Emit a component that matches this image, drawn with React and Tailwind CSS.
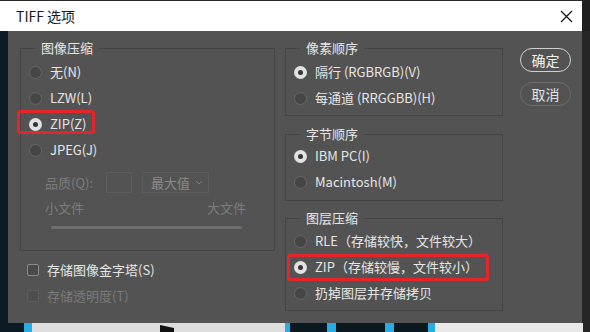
import React from "react";

const Radio = ({ checked }) =>
  checked ? (
    <span className="flex h-[13px] w-[13px] shrink-0 items-center justify-center rounded-full bg-[#e2e2e2]">
      <span className="h-[5px] w-[5px] rounded-full bg-[#363636]" />
    </span>
  ) : (
    <span className="h-[13px] w-[13px] shrink-0 rounded-full border border-[#676767] bg-[#464646]" />
  );

const Option = ({ label, checked, mark }) => (
  <div className="relative flex h-[26px] items-center gap-[8px] pl-[8px] text-[13px] text-[#e6e6e6]">
    <Radio checked={checked} />
    <span>{label}</span>
    {mark && (
      <span className={"pointer-events-none absolute rounded-[3px] border-[3px] border-[#e3262c] " + mark} />
    )}
  </div>
);

const Group = ({ title, className, children }) => (
  <fieldset className={"border border-[#444444] " + className}>
    <legend className="ml-[14px] px-[6px] text-[13px] leading-[18px] text-[#e6e6e6]">{title}</legend>
    {children}
  </fieldset>
);

const Check = ({ label, disabled }) => (
  <div className="flex h-[22px] items-center gap-[8px] pl-[7px] text-[13px]">
    <span
      className={
        disabled
          ? "h-[12px] w-[12px] rounded-[2px] border border-[#5d5d5d] bg-[#4e4e4e]"
          : "h-[12px] w-[12px] rounded-[2px] border border-[#8a8a8a] bg-[#4a4a4a]"
      }
    />
    <span className={disabled ? "text-[#7a7a7a]" : "text-[#e6e6e6]"}>{label}</span>
  </div>
);

export default function App() {
  return (
    <div className="flex h-[332px] w-[590px] flex-col overflow-hidden bg-[#0c1a23] font-['Noto_Sans_CJK_SC','Noto_Sans',sans-serif]">
      {/* title bar */}
      <div className="flex h-[31px] shrink-0">
        <div className="flex w-[582px] items-center justify-between border-t border-[#2a2a2a] bg-white pl-[16px] pr-[9px]">
          <span className="text-[14px] text-[#1a1a1a]">TIFF 选项</span>
          <svg width="13" height="13" viewBox="0 0 13 13">
            <path d="M1 1L12 12M12 1L1 12" stroke="#111" strokeWidth="1.2" />
          </svg>
        </div>
        <div className="flex-1 bg-[#1f1f1f]" />
      </div>

      {/* dialog body */}
      <div className="flex h-[292px] shrink-0">
        <div className="w-[8px] bg-[#0d1b24]" />
        <div className="flex w-[574px] bg-[#535353] pl-[12px] pt-[8px]">
          {/* left column */}
          <div className="flex w-[255px] flex-col">
            <Group title="图像压缩" className="w-[255px] pb-[21px]">
              <div className="pt-[2px]">
                <Option label="无(N)" />
                <Option label="LZW(L)" />
                <Option label="ZIP(Z)" checked mark="left-[-4px] top-[-1px] h-[24px] w-[78px]" />
                <Option label="JPEG(J)" />
              </div>
              <div className="mt-[8px] flex h-[23px] items-center pl-[24px] text-[13px] text-[#7c7c7c]">
                <span className="w-[61px]">品质(Q):</span>
                <span className="h-[21px] w-[26px] border border-[#5c5c5c]" />
                <span className="ml-[10px] flex h-[21px] w-[67px] items-center justify-between border border-[#5c5c5c] pl-[8px] pr-[5px]">
                  <span className="text-[#8a8a8a]">最大值</span>
                  <svg width="8" height="5" viewBox="0 0 8 5">
                    <path d="M1 1L4 4L7 1" stroke="#7a7a7a" fill="none" strokeWidth="1" />
                  </svg>
                </span>
              </div>
              <div className="mt-[5px] flex h-[18px] items-center justify-between pl-[24px] pr-[28px] text-[13px] text-[#7c7c7c]">
                <span>小文件</span>
                <span>大文件</span>
              </div>
              <div className="ml-[30px] mr-[32px] mt-[9px] h-[3px] rounded-full bg-[#6e6e6e]" />
            </Group>
            <div className="mt-[8px]">
              <Check label="存储图像金字塔(S)" />
            </div>
            <div className="mt-[4px]">
              <Check label="存储透明度(T)" disabled />
            </div>
          </div>

          {/* right column */}
          <div className="ml-[10px] flex w-[218px] flex-col">
            <Group title="像素顺序" className="pb-[4px]">
              <div className="pt-[2px]">
                <Option label="隔行 (RGBRGB)(V)" checked />
                <Option label="每通道 (RRGGBB)(H)" />
              </div>
            </Group>
            <Group title="字节顺序" className="mt-[9px] pb-[5px]">
              <Option label="IBM PC(I)" checked />
              <Option label="Macintosh(M)" />
            </Group>
            <Group title="图层压缩" className="mt-[8px] pb-[4px]">
              <div className="pt-[1px]">
                <Option label="RLE（存储较快，文件较大）" />
                <Option label="ZIP（存储较慢，文件较小）" checked mark="left-[1px] top-0 h-[27px] w-[202px]" />
                <Option label="扔掉图层并存储拷贝" />
              </div>
            </Group>
          </div>

          {/* buttons */}
          <div className="ml-[17px] mt-[9px] flex flex-col gap-[10px]">
            <button className="flex h-[24px] w-[51px] items-center justify-center rounded-full border-[1.5px] border-[#d0d0d0] text-[14px] text-[#f0f0f0]">
              确定
            </button>
            <button className="flex h-[24px] w-[51px] items-center justify-center rounded-full border-[1.5px] border-[#6c6c6c] text-[14px] text-[#e2e2e2]">
              取消
            </button>
          </div>
        </div>
        <div className="flex-1 bg-[#262626]" />
      </div>

      {/* background picture below the dialog */}
      <div className="flex h-[9px] shrink-0">
        <div className="w-[24px] bg-[#0b1a23]" />
        <div className="w-[8px] bg-[#27ade6]" />
        <div className="w-[253px] bg-[#dedede] pl-[128px]">
          <svg width="16" height="9" viewBox="0 0 16 9">
            <polygon points="0,2 14,5 14,9 0,9" fill="#111" />
          </svg>
        </div>
        <div className="w-[5px] bg-[#27ade6]" />
        <div className="w-[37px] bg-[#0b1820]" />
        <div className="w-[9px] bg-[#27ade6]" />
        <div className="w-[49px] bg-[#0b1820]" />
        <div className="w-[9px] bg-[#27ade6]" />
        <div className="w-[34px] bg-[#0b1820]" />
        <div className="w-[7px] bg-[#27ade6]" />
        <div className="w-[148px] bg-[#e8e8e8]" />
        <div className="flex-1 bg-[#262626]" />
      </div>
    </div>
  );
}
